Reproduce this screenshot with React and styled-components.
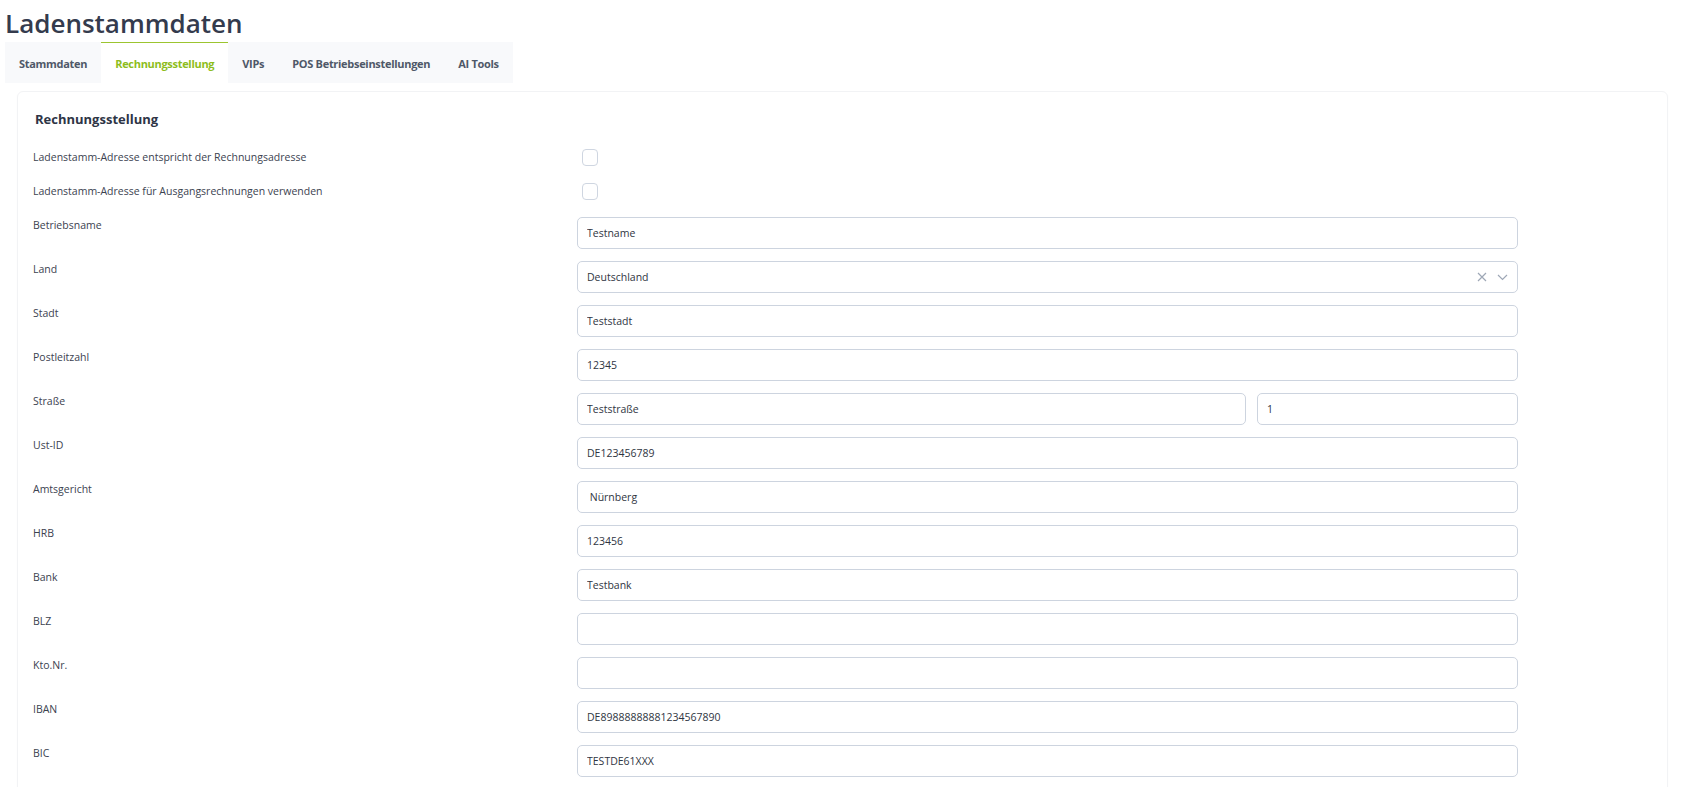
import React from "react"
import styled, { createGlobalStyle } from "styled-components"

const GlobalStyle = createGlobalStyle`
    body {
        margin: 0;
        background: #ffffff;
        font-family: "Open Sans", "Noto Sans", sans-serif;
    }
`

const Page = styled.div`
    padding: 0 5px;
`

const Heading = styled.h1`
    margin: 0;
    padding-top: 5px;
    font-size: 26px;
    line-height: 36px;
    font-weight: 600;
    color: #343b4d;
`

/* ---- TABS ---- */
const TabBar = styled.div`
    display: inline-flex;
    margin-top: 1px;
    background: #f8f9fb;
`

const Tab = styled.div`
    height: 41px;
    box-sizing: border-box;
    padding: 0 14px;
    display: flex;
    align-items: center;
    font-size: 11px;
    letter-spacing: -0.3px;
    font-weight: 700;
    color: ${props => props.$active ? "#8dbd1c" : "#4f5868"};
    background: ${props => props.$active ? "#ffffff" : "transparent"};
    border-top: 1px solid ${props => props.$active ? "#9cc530" : "transparent"};
`

/* ---- CARD ---- */
const Card = styled.div`
    margin: 8px 13px 0 12px;
    padding: 18px 15px 20px;
    border: 1px solid #f2f3f5;
    border-radius: 6px;
    box-shadow: 0 1px 3px rgba(0, 0, 0, 0.02);
`

const SectionTitle = styled.h3`
    margin: 0 0 21px 2px;
    font-size: 13px;
    font-weight: 700;
    color: #2e3546;
`

const Form = styled.div`
    display: flex;
    flex-direction: column;
`

const Row = styled.div`
    display: grid;
    grid-template-columns: 544px 941px;
    margin-bottom: ${props => props.$gap}px;
`

const Label = styled.div`
    font-size: 10.5px;
    line-height: 16px;
    color: #3b4250;
`

const Fields = styled.div`
    display: flex;
    gap: 11px;
`

const CheckBox = styled.div`
    width: 16px;
    height: 17px;
    box-sizing: border-box;
    margin-left: 5px;
    border: 1px solid #cfd6e1;
    border-radius: 4px;
    background: #fff;
`

const Input = styled.input`
    flex: ${props => props.$width ? "none" : "1"};
    width: ${props => props.$width ? props.$width + "px" : "auto"};
    min-width: 0;
    height: 32px;
    box-sizing: border-box;
    padding: 0 9px;
    border: 1px solid #cdd4df;
    border-radius: 5px;
    font-family: inherit;
    font-size: 10.5px;
    color: #2f3542;
    background: #fff;
    outline: none;
`

const Select = styled.div`
    flex: 1;
    height: 32px;
    box-sizing: border-box;
    padding: 0 9px 0 9px;
    display: flex;
    align-items: center;
    border: 1px solid #cdd4df;
    border-radius: 5px;
    font-size: 10.5px;
    color: #2f3542;
`

const SelectValue = styled.span`
    flex: 1;
`

const SelectIcons = styled.span`
    display: flex;
    align-items: center;
    gap: 10px;
    color: #9ea7b6;
`

const ClearIcon = () => (
    <svg width="10" height="10" viewBox="0 0 10 10">
        <path d="M1 1 L9 9 M9 1 L1 9" stroke="currentColor" strokeWidth="1.2" fill="none" />
    </svg>
)

const ChevronIcon = () => (
    <svg width="11" height="7" viewBox="0 0 11 7">
        <path d="M1 1 L5.5 5.5 L10 1" stroke="currentColor" strokeWidth="1.2" fill="none" />
    </svg>
)

const tabs = ["Stammdaten", "Rechnungsstellung", "VIPs", "POS Betriebseinstellungen", "AI Tools"]

const textRows = [
    ["Stadt", "Teststadt"],
    ["Postleitzahl", "12345"],
]

const lowerRows = [
    ["Ust-ID", "DE123456789"],
    ["Amtsgericht", " Nürnberg"],
    ["HRB", "123456"],
    ["Bank", "Testbank"],
    ["BLZ", ""],
    ["Kto.Nr.", ""],
    ["IBAN", "DE89888888881234567890"],
    ["BIC", "TESTDE61XXX"],
]

const TextRow = ({ label, value }) => (
    <Row $gap={12}>
        <Label>{label}</Label>
        <Fields>
            <Input defaultValue={value} />
        </Fields>
    </Row>
)

const App = () => {
    return (
        <Page>
            <GlobalStyle />
            <Heading>Ladenstammdaten</Heading>
            <TabBar>
                {tabs.map(t => (
                    <Tab key={t} $active={t === "Rechnungsstellung"}>{t}</Tab>
                ))}
            </TabBar>
            <Card>
                <SectionTitle>Rechnungsstellung</SectionTitle>
                <Form>
                    <Row $gap={17}>
                        <Label>Ladenstamm-Adresse entspricht der Rechnungsadresse</Label>
                        <Fields><CheckBox /></Fields>
                    </Row>
                    <Row $gap={17}>
                        <Label>Ladenstamm-Adresse für Ausgangsrechnungen verwenden</Label>
                        <Fields><CheckBox /></Fields>
                    </Row>
                    <TextRow label="Betriebsname" value="Testname" />
                    <Row $gap={12}>
                        <Label>Land</Label>
                        <Fields>
                            <Select>
                                <SelectValue>Deutschland</SelectValue>
                                <SelectIcons>
                                    <ClearIcon />
                                    <ChevronIcon />
                                </SelectIcons>
                            </Select>
                        </Fields>
                    </Row>
                    {textRows.map(([l, v]) => <TextRow key={l} label={l} value={v} />)}
                    <Row $gap={12}>
                        <Label>Straße</Label>
                        <Fields>
                            <Input defaultValue="Teststraße" />
                            <Input $width={261} defaultValue="1" />
                        </Fields>
                    </Row>
                    {lowerRows.map(([l, v]) => <TextRow key={l} label={l} value={v} />)}
                </Form>
            </Card>
        </Page>
    )
}

export default App
